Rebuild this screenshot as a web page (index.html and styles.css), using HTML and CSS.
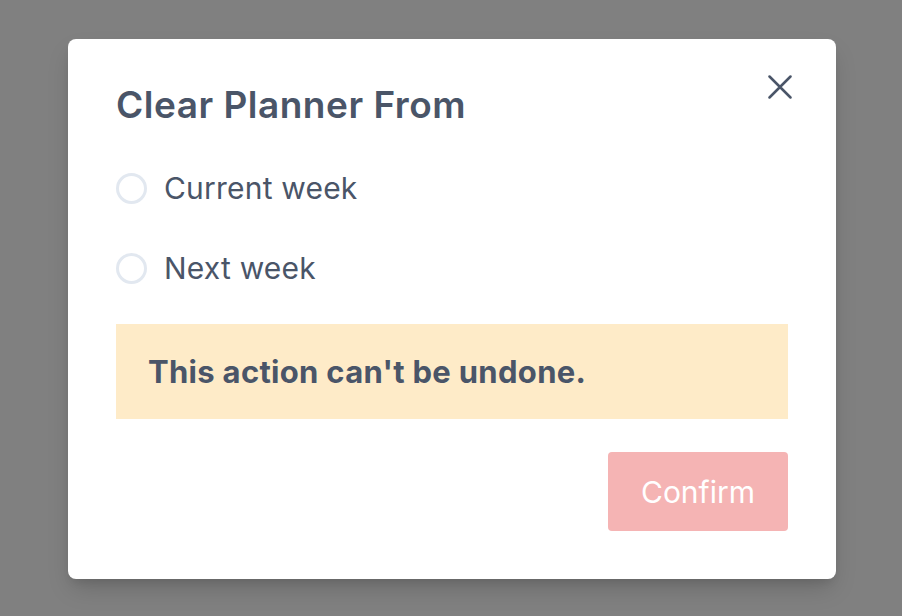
FILE: index.html
```html
<!DOCTYPE html>
<html lang="en">
<head>
<meta charset="utf-8">
<title>Clear Planner</title>
<link rel="stylesheet" href="styles.css">
</head>
<body>
<div class="overlay">
  <div class="modal" role="dialog" aria-labelledby="modal-title">
    <button class="close" aria-label="Close">
      <svg width="24" height="24" viewBox="0 0 24 24" fill="none" stroke="#4a5568" stroke-width="2.5" stroke-linecap="round"><path d="M1.5 1.5 L22.5 22.5 M22.5 1.5 L1.5 22.5"/></svg>
    </button>
    <h2 class="title" id="modal-title">Clear Planner From</h2>
    <div class="options">
      <label class="option"><span class="radio"></span><span class="option-label">Current week</span></label>
      <label class="option"><span class="radio"></span><span class="option-label">Next week</span></label>
    </div>
    <div class="warning">This action can't be undone.</div>
    <div class="actions">
      <button class="confirm">Confirm</button>
    </div>
  </div>
</div>
</body>
</html>
```
FILE: styles.css
```css
* { box-sizing: border-box; }
html, body { margin: 0; padding: 0; }
body {
  background: #808080;
  font-family: Inter, "Noto Sans", sans-serif;
  color: #4a5568;
}
.overlay {
  width: 902px;
  height: 616px;
  padding: 2px 0 0 2px;
  display: flex;
  align-items: center;
  justify-content: center;
}
.modal {
  position: relative;
  width: 768px;
  height: 540px;
  background: #fff;
  border-radius: 8px;
  padding: 48px;
  box-shadow: 0 12px 24px -4px rgba(0,0,0,0.18), 0 6px 10px -4px rgba(0,0,0,0.1);
}
.close {
  position: absolute;
  top: 36px;
  right: 44px;
  width: 24px;
  height: 24px;
  padding: 0;
  border: 0;
  background: none;
  display: flex;
}
.title {
  margin: 0;
  font-size: 37px;
  line-height: 36px;
  font-weight: 600;
  letter-spacing: 0.5px;
}
.options {
  margin-top: 49px;
  display: flex;
  flex-direction: column;
  gap: 48px;
}
.option {
  display: flex;
  align-items: center;
  gap: 17px;
  height: 32px;
}
.radio {
  width: 31px;
  height: 31px;
  border: 3px solid #e2e8f0;
  border-radius: 50%;
  flex: none;
}
.option-label {
  font-size: 30px;
  line-height: 32px;
  letter-spacing: 0.2px;
}
.warning {
  margin-top: 40px;
  background: #feebc8;
  height: 95px;
  padding: 0 32px;
  display: flex;
  align-items: center;
  font-size: 31px;
  font-weight: 700;
  letter-spacing: 0.3px;
}
.actions {
  margin-top: 33px;
  display: flex;
  justify-content: flex-end;
}
.confirm {
  width: 180px;
  height: 79px;
  border: 0;
  border-radius: 4px;
  background: #f5b4b4;
  color: #fff;
  font-family: Inter, "Noto Sans", sans-serif;
  font-size: 30px;
  padding: 0;
}
```
